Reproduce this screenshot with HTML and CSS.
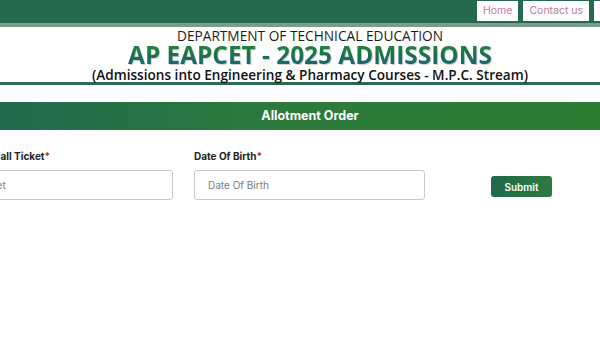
FILE: index.html
```html
<!DOCTYPE html>
<html lang="en">
<head>
    <meta charset="UTF-8">
    <meta name="viewport" content="width=device-width, initial-scale=1.0">
    <title>AP EAPCET - 2025 Admissions</title>
    <link rel="stylesheet" href="styles.css">
</head>
<body>

<div class="topbar">
    <a class="nav-link" href="#">Home</a>
    <a class="nav-link" href="#">Contact us</a>
    <a class="nav-link" href="#">Candidate Login</a>
</div>

<div class="banner">
    <div class="dept">DEPARTMENT OF TECHNICAL EDUCATION</div>
    <div class="title">AP EAPCET - 2025 ADMISSIONS</div>
    <div class="subtitle">(Admissions into Engineering &amp; Pharmacy Courses - M.P.C. Stream)</div>
</div>

<div class="section-bar">Allotment Order</div>

<form class="form-row" id="allotmentForm">
    <div class="field field-first">
        <label for="hallTicket">Hall Ticket<span class="req">*</span></label>
        <input type="text" id="hallTicket" placeholder="Hall Ticket">
    </div>
    <div class="field">
        <label for="dob">Date Of Birth<span class="req">*</span></label>
        <input type="text" id="dob" placeholder="Date Of Birth">
    </div>
    <div class="actions">
        <button type="submit">Submit</button>
    </div>
</form>

</body>
</html>
```

FILE: styles.css
```css
body {
    margin: 0;
    font-family: "Open Sans", sans-serif;
    background: #fff;
    overflow: hidden;
}
.topbar {
    height: 22px;
    background-color: #27694f;
    border-bottom: 4px solid #7b9c8d;
    display: flex;
    gap: 5px;
    padding: 1px 0 0 477px;
    overflow: hidden;
}
.nav-link {
    display: block;
    flex-shrink: 0;
    height: 20px;
    line-height: 20px;
    padding: 0 6px;
    background: #fff;
    color: #c07aa2;
    font-family: Inter, sans-serif;
    font-size: 10.5px;
    text-decoration: none;
    white-space: nowrap;
}
.banner {
    text-align: center;
    padding-left: 20px;
    border-bottom: 3px solid #2a6b50;
    height: 55px;
}
.dept {
    font-size: 13.7px;
    line-height: 15px;
    color: #1b1b1b;
    padding-top: 1px;
}
.title {
    font-size: 24.4px;
    font-weight: 700;
    line-height: 24px;
    background: linear-gradient(#23893c, #1a7247 50%, #1c6188);
    -webkit-background-clip: text;
    background-clip: text;
    color: transparent;
    filter: drop-shadow(1px 1px 0 rgba(0, 0, 0, 0.18));
}
.subtitle {
    font-size: 13.6px;
    font-weight: 600;
    line-height: 16px;
    color: #111;
}
.section-bar {
    margin-top: 17px;
    height: 28px;
    line-height: 28px;
    padding-left: 20px;
    text-align: center;
    color: #fff;
    font-family: Inter, sans-serif;
    font-weight: 700;
    font-size: 12.5px;
    background: linear-gradient(90deg, #23694f, #2b7a3b 45%, #2e7b33);
}
.form-row {
    display: flex;
    align-items: flex-end;
    gap: 21px;
    margin-left: -58px;
    margin-top: 20px;
}
.field {
    display: flex;
    flex-direction: column;
    width: 231px;
}
.field-first label {
    padding-left: 51px;
}
label {
    font-family: Inter, sans-serif;
    font-size: 10px;
    font-weight: 700;
    color: #222;
    margin-bottom: 8px;
}
.req {
    color: #c0203a;
}
input {
    box-sizing: border-box;
    height: 30px;
    padding: 0 13px;
    border: 1px solid #c8c8c8;
    border-radius: 3px;
    font-family: Inter, sans-serif;
    font-size: 10px;
    color: #333;
}
input::placeholder {
    color: #7a7a7a;
}
.actions {
    padding-left: 45px;
    padding-bottom: 3px;
}
button {
    width: 61px;
    height: 21px;
    border: none;
    border-radius: 3px;
    background: linear-gradient(90deg, #1f6a4b, #2c7a3f);
    color: #fff;
    font-family: Inter, sans-serif;
    font-weight: 600;
    font-size: 10px;
    cursor: pointer;
}
```
